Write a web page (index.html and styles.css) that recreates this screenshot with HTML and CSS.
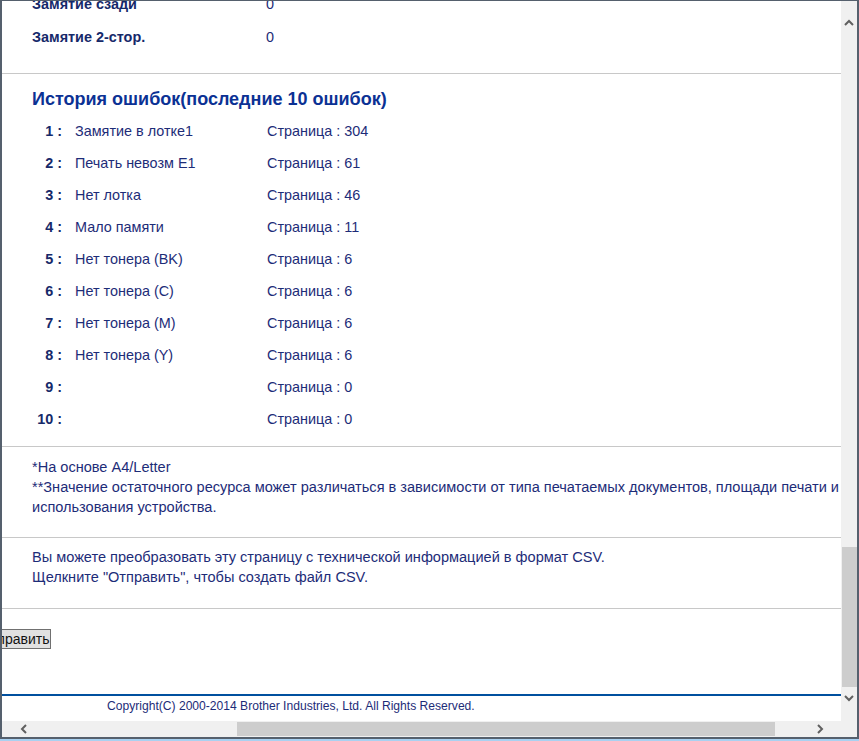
FILE: index.html
```html
<!DOCTYPE html>
<html lang="ru">
<head>
    <meta charset="UTF-8">
    <title>Информация об обслуживании</title>
    <link rel="stylesheet" href="styles.css">
</head>
<body>
    <div class="window">
        <div class="frame">
            <div class="viewport">
                <div class="counters">
                    <div class="row first"><span class="label">Замятие сзади</span><span>0</span></div>
                    <div class="row"><span class="label">Замятие 2-стор.</span><span>0</span></div>
                </div>

                <div class="history">
                    <h2>История ошибок(последние 10 ошибок)</h2>
                    <div class="errors">
                        <span class="num">1 :</span><span>Замятие в лотке1</span><span>Страница : 304</span>
                        <span class="num">2 :</span><span>Печать невозм E1</span><span>Страница : 61</span>
                        <span class="num">3 :</span><span>Нет лотка</span><span>Страница : 46</span>
                        <span class="num">4 :</span><span>Мало памяти</span><span>Страница : 11</span>
                        <span class="num">5 :</span><span>Нет тонера (BK)</span><span>Страница : 6</span>
                        <span class="num">6 :</span><span>Нет тонера (C)</span><span>Страница : 6</span>
                        <span class="num">7 :</span><span>Нет тонера (M)</span><span>Страница : 6</span>
                        <span class="num">8 :</span><span>Нет тонера (Y)</span><span>Страница : 6</span>
                        <span class="num">9 :</span><span></span><span>Страница : 0</span>
                        <span class="num">10 :</span><span></span><span>Страница : 0</span>
                    </div>
                </div>

                <div class="notes">
                    <p>*На основе A4/Letter</p>
                    <p>**Значение остаточного ресурса может различаться в зависимости от типа печатаемых документов, площади печати и использования устройства.</p>
                </div>

                <div class="csv">
                    <p>Вы можете преобразовать эту страницу с технической информацией в формат CSV.</p>
                    <p>Щелкните "Отправить", чтобы создать файл CSV.</p>
                </div>

                <div class="submit">
                    <button type="button" class="btn">Отправить</button>
                </div>

                <div class="footer">Copyright(C) 2000-2014 Brother Industries, Ltd. All Rights Reserved.</div>
            </div>

            <div class="vscroll">
                <div class="arrow up">
                    <svg width="10" height="7" viewBox="0 0 10 7"><path d="M1 6 L5 2 L9 6" fill="none" stroke="#606060" stroke-width="2"/></svg>
                </div>
                <div class="track"><div class="thumb"></div></div>
                <div class="arrow down">
                    <svg width="10" height="7" viewBox="0 0 10 7"><path d="M1 1 L5 5 L9 1" fill="none" stroke="#606060" stroke-width="2"/></svg>
                </div>
            </div>

            <div class="hscroll">
                <div class="arrow left">
                    <svg width="7" height="10" viewBox="0 0 7 10"><path d="M6 1 L2 5 L6 9" fill="none" stroke="#606060" stroke-width="2"/></svg>
                </div>
                <div class="track"><div class="thumb"></div></div>
                <div class="arrow right">
                    <svg width="7" height="10" viewBox="0 0 7 10"><path d="M1 1 L5 5 L1 9" fill="none" stroke="#606060" stroke-width="2"/></svg>
                </div>
            </div>

            <div class="corner"></div>
        </div>
    </div>
</body>
</html>
```

FILE: styles.css
```css
html, body {
    margin: 0;
    padding: 0;
    overflow: hidden;
}

body {
    font-family: "Liberation Sans", Arial, sans-serif;
    font-size: 14.4px;
    color: #1d2c78;
    background: #a9d1f1;
}

.window {
    width: 859px;
    height: 739px;
    box-sizing: border-box;
    border-top: 1px solid #55606d;
    border-left: 2px solid #55606d;
    border-right: 2px solid #55606d;
    border-bottom: 2px solid #55606d;
    background: #fff;
}

.frame {
    display: grid;
    grid-template-columns: 839px 16px;
    grid-template-rows: 720px 16px;
    height: 100%;
}

.viewport {
    overflow: hidden;
    background: #fff;
}

/* counters at the top, scrolled half out of view */
.counters {
    margin-top: -14px;
    padding: 0 0 20px 30px;
    border-bottom: 1px solid #c8c8c8;
}

.row {
    display: flex;
    height: 32px;
    align-items: center;
}

.row.first {
    height: 34px;
}

.label {
    width: 234px;
    font-weight: bold;
    color: #16296a;
}

.history {
    padding: 0 0 11px 30px;
    border-bottom: 1px solid #c8c8c8;
}

.history h2 {
    margin: 0;
    padding: 14px 0 5px;
    font-size: 18px;
    line-height: 22px;
    color: #0b3194;
}

.errors {
    display: grid;
    grid-template-columns: 30px 192px auto;
    grid-auto-rows: 32px;
    column-gap: 13px;
    align-items: center;
}

.errors span:nth-child(3n) {
    margin-left: -13px;
}

.num {
    text-align: right;
    font-weight: bold;
    color: #16296a;
}

.notes {
    padding: 10px 0 20px 30px;
    border-bottom: 1px solid #c8c8c8;
}

.csv {
    padding: 9px 0 21px 30px;
    border-bottom: 1px solid #c8c8c8;
}

.notes p, .csv p {
    margin: 0;
    font-size: 14.55px;
    line-height: 20px;
}

.submit {
    padding: 20px 0 45px;
    border-bottom: 2px solid #00509f;
}

.btn {
    display: block;
    margin-left: -24px;
    height: 20px;
    padding: 0 1px;
    font-family: "Liberation Sans", Arial, sans-serif;
    font-size: 14px;
    color: #111;
    background: #e1e1e1;
    border: 1px solid #707070;
    border-radius: 0;
}

.footer {
    padding: 3px 0 0 105px;
    font-size: 12.1px;
    line-height: 14px;
    color: #1d2c78;
}

/* scrollbars */
.vscroll, .hscroll, .corner {
    background: #f0f0f0;
}

.vscroll {
    display: flex;
    flex-direction: column;
}

.vscroll .arrow {
    height: 34px;
    display: flex;
    justify-content: center;
}

.vscroll .up {
    padding-top: 18px;
    box-sizing: border-box;
}

.vscroll .down {
    padding-top: 8px;
    box-sizing: border-box;
}

.vscroll .track {
    flex: 1;
}

.vscroll .thumb {
    margin: 512px 0 0 1px;
    height: 140px;
    background: #cdcdcd;
}

.hscroll {
    display: flex;
}

.hscroll .arrow {
    width: 40px;
    box-sizing: border-box;
    display: flex;
    align-items: center;
    justify-content: center;
}

.hscroll .left {
    padding-left: 3px;
}

.hscroll .right {
    padding-right: 2px;
}

.hscroll .track {
    flex: 1;
    padding-top: 1px;
}

.hscroll .thumb {
    margin-left: 195px;
    width: 538px;
    height: 14px;
    background: #cdcdcd;
}
```
